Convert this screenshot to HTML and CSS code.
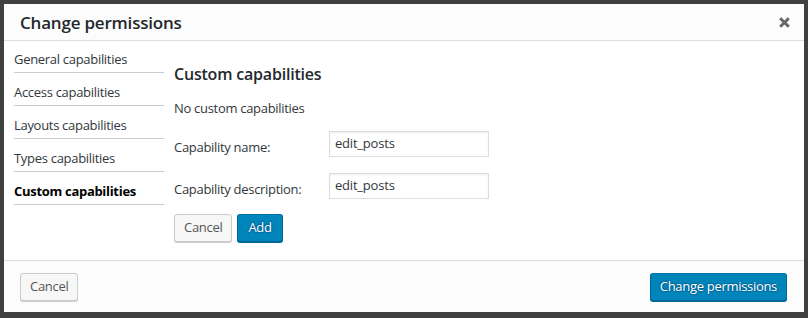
FILE: index.html
```html
<!doctype html>
<html lang="en">
  <head>
    <meta charset="UTF-8" />
    <title>Change permissions</title>
    <link rel="stylesheet" href="styles.css">
  </head>
  <body>
    <div class="dialog">
      <div class="dialog-header">
        <h1>Change permissions</h1>
        <button class="close-btn" aria-label="Close">
          <svg width="11" height="11" viewBox="0 0 11 11">
            <path d="M1.2 1.2 L9.8 9.8 M9.8 1.2 L1.2 9.8" stroke="#666" stroke-width="3" />
          </svg>
        </button>
      </div>

      <div class="dialog-body">
        <ul class="cap-menu">
          <li>General capabilities</li>
          <li>Access capabilities</li>
          <li>Layouts capabilities</li>
          <li>Types capabilities</li>
          <li class="active">Custom capabilities</li>
        </ul>

        <div class="cap-content">
          <h2>Custom capabilities</h2>
          <p class="empty">No custom capabilities</p>

          <div class="field">
            <label for="capName">Capability name:</label>
            <input id="capName" type="text" value="edit_posts">
          </div>
          <div class="field">
            <label for="capDesc">Capability description:</label>
            <input id="capDesc" type="text" value="edit_posts">
          </div>

          <div class="actions">
            <button class="button">Cancel</button>
            <button class="button button-primary">Add</button>
          </div>
        </div>
      </div>

      <div class="dialog-footer">
        <button class="button">Cancel</button>
        <button class="button button-primary">Change permissions</button>
      </div>
    </div>
  </body>
</html>
```

FILE: styles.css
```css
* {
  margin: 0;
  padding: 0;
  box-sizing: border-box;
}

body {
  font-family: "Open Sans", "Noto Sans", sans-serif;
  font-size: 13px;
  color: #32373c;
  background: #404040;
  padding: 4px;
}

.dialog {
  width: 800px;
  height: 308px;
  background: #fff;
  display: flex;
  flex-direction: column;
}

.dialog-header {
  height: 37px;
  background: #fcfcfc;
  border-bottom: 1px solid #ddd;
  display: flex;
  align-items: center;
  justify-content: space-between;
  padding: 0 13px 0 16px;
}

.dialog-header h1 {
  font-size: 17px;
  font-weight: 600;
  color: #23282d;
  letter-spacing: -0.2px;
}

.close-btn {
  background: none;
  border: none;
  width: 14px;
  height: 14px;
  display: flex;
  align-items: center;
  justify-content: center;
  cursor: pointer;
}

.dialog-body {
  flex: 1;
  display: flex;
  gap: 10px;
  padding: 0 10px;
}

.cap-menu {
  list-style: none;
  width: 150px;
  margin-top: -1px;
}

.cap-menu li {
  height: 33px;
  padding-top: 2px;
  line-height: 34px;
  border-bottom: 1px solid #ccc;
  letter-spacing: -0.3px;
  white-space: nowrap;
}

.cap-menu li.active {
  font-weight: 700;
  color: #000;
}

.cap-content {
  padding-top: 20px;
}

.cap-content h2 {
  font-size: 16px;
  font-weight: 600;
  color: #23282d;
  line-height: 26px;
  letter-spacing: -0.2px;
}

.empty {
  margin-top: 11px;
  line-height: 20px;
  letter-spacing: -0.3px;
}

.field {
  display: flex;
  align-items: center;
  margin-top: 13px;
}

.field + .field {
  margin-top: 16px;
}

.field label {
  width: 155px;
  letter-spacing: -0.3px;
  padding-top: 6px;
}

.field input {
  width: 160px;
  height: 26px;
  border: 1px solid #ddd;
  box-shadow: inset 0 1px 2px rgba(0, 0, 0, 0.07);
  padding: 0 5px 3px;
  font-family: inherit;
  font-size: 13px;
  color: #32373c;
  letter-spacing: -0.2px;
}

.actions {
  margin-top: 15px;
  display: flex;
  gap: 5px;
}

.actions .button-primary {
  padding: 0 10px 2px;
}

.button {
  height: 28px;
  padding: 0 9px 2px;
  font-family: inherit;
  font-size: 13px;
  letter-spacing: -0.3px;
  color: #555;
  background: #f7f7f7;
  border: 1px solid #ccc;
  border-radius: 3px;
  box-shadow: 0 1px 0 #ccc;
  cursor: pointer;
}

.button-primary {
  color: #fff;
  background: #0085ba;
  border-color: #0073aa #006799 #006799;
  box-shadow: 0 1px 0 #006799;
  text-shadow: 0 -1px 1px #006799, 1px 0 1px #006799, 0 1px 1px #006799, -1px 0 1px #006799;
}

.dialog-footer {
  height: 52px;
  background: #fcfcfc;
  border-top: 1px solid #ddd;
  display: flex;
  align-items: center;
  justify-content: space-between;
  padding: 0 17px 0 16px;
}
```
